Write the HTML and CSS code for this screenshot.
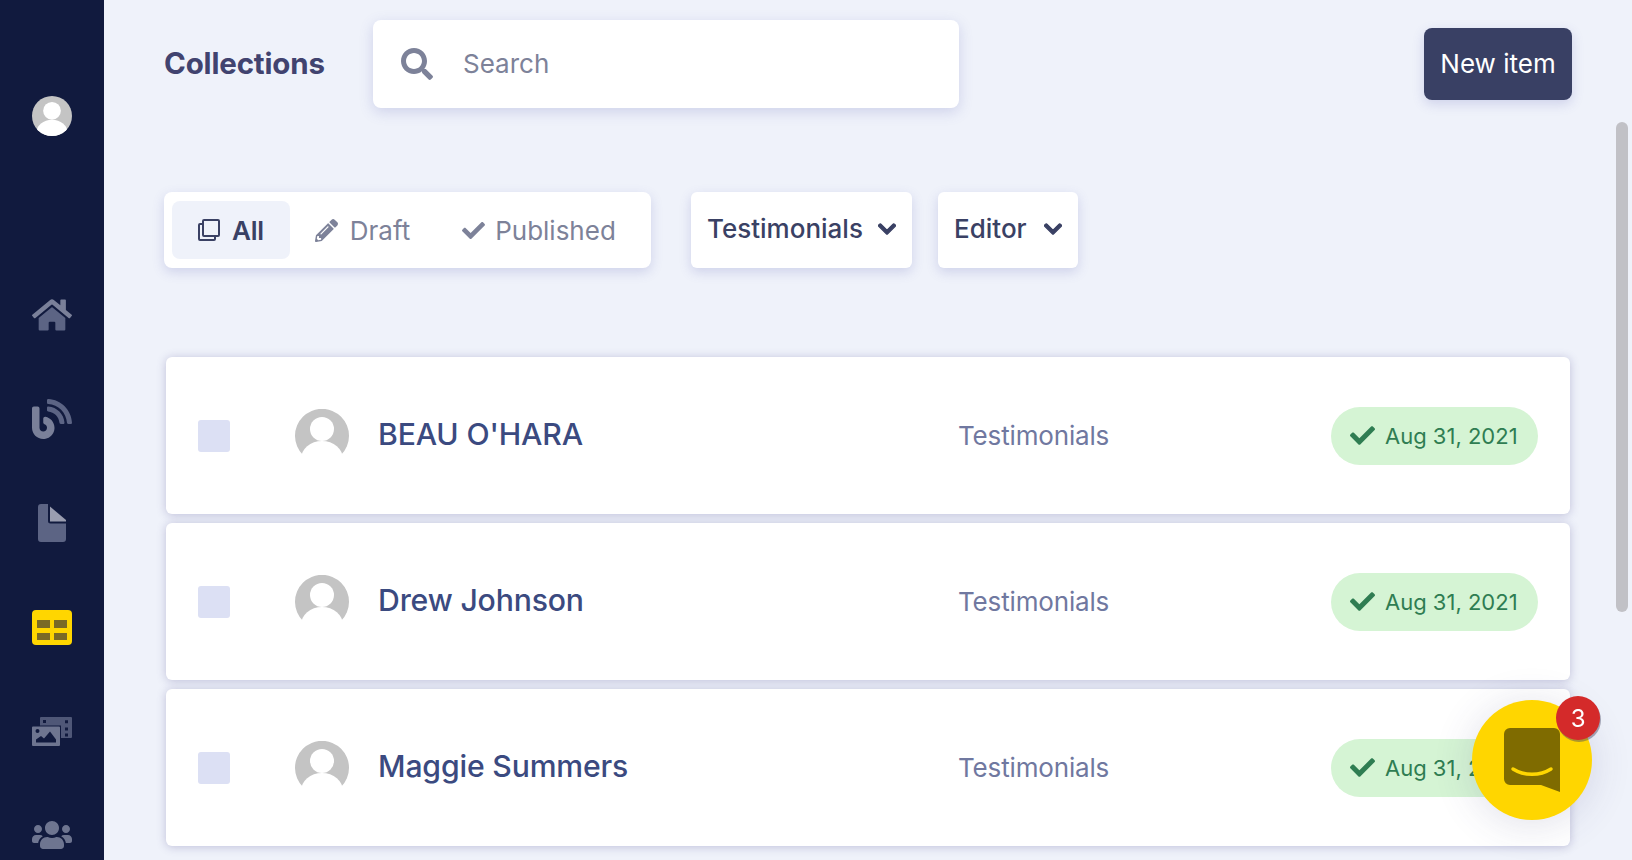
FILE: index.html
```html
<!DOCTYPE html>
<html lang="en">
<head>
<meta charset="utf-8">
<title>Collections</title>
<link rel="stylesheet" href="styles.css">
</head>
<body>
<div class="app">
  <aside class="sidebar">
    <div class="side-avatar">
      <svg viewBox="0 0 54 54" class="avatar-svg"><defs><clipPath id="ca"><circle cx="27" cy="27" r="27"/></clipPath></defs><circle cx="27" cy="27" r="27" fill="#c4c4c4"/><g clip-path="url(#ca)" fill="#fff"><circle cx="27" cy="20" r="12"/><ellipse cx="27" cy="50" rx="21" ry="18"/></g></svg>
    </div>
    <nav class="side-nav">
      <a class="slot"><svg class="i-home" viewBox="0 0 576 512"><path fill="#5c6484" d="M280.37 148.26L96 300.11V464a16 16 0 0 0 16 16l112.06-.29a16 16 0 0 0 15.92-16V368a16 16 0 0 1 16-16h64a16 16 0 0 1 16 16v95.64a16 16 0 0 0 16 16.05L464 480a16 16 0 0 0 16-16V300L295.67 148.26a12.19 12.19 0 0 0-15.3 0z"/><path fill="#7a8099" d="M571.6 251.47L488 182.56V44.05a12 12 0 0 0-12-12h-56a12 12 0 0 0-12 12v72.61L318.47 43a48 48 0 0 0-61 0L4.34 251.47a12 12 0 0 0-1.6 16.9l25.5 31A12 12 0 0 0 45.15 301l235.22-193.74a12.19 12.19 0 0 1 15.3 0L530.9 301a12 12 0 0 0 16.9-1.6l25.5-31a12 12 0 0 0-1.7-16.93z"/></svg></a>
      <a class="slot"><svg class="i-blog" viewBox="0 0 512 512"><path fill="#7a8099" d="M172.2 226.8c-14.6-2.9-28.2 8.9-28.2 23.8V301c0 10.2 7.1 18.4 16.7 22 18.2 6.8 31.3 24.4 31.3 45 0 26.5-21.5 48-48 48s-48-21.5-48-48V120c0-13.3-10.7-24-24-24H24c-13.3 0-24 10.7-24 24v248c0 89.5 82.1 160.2 175 140.7 54.4-11.4 98.3-55.4 109.7-109.7 17.4-82.9-37-157.2-112.5-172.2z"/><path fill="#5c6484" d="M209 0c-9.2-.5-17 6.8-17 16v31.6c0 8.5 6.6 15.5 15 15.9 129.4 7 233.1 112 240.9 241.5.5 8.4 7.5 15 15.9 15h32.1c9.2 0 16.5-7.8 16-17C503.4 139.8 372.2 8.6 209 0zm.3 96c-9.3-.7-17.3 6.7-17.3 16.1v32.1c0 8.4 6.5 15.3 14.8 15.9 76.8 6.3 138 68.2 144.9 145.2.8 8.3 7.6 14.7 15.9 14.7h32.2c9.3 0 16.8-8 16.1-17.3-8.4-110.1-96.5-198.2-206.6-206.7z"/></svg></a>
      <a class="slot"><svg class="i-file" viewBox="0 0 28 38"><path fill="#5c6484" d="M3 0h7v17a2.500 2.500 0 0 0 2.500 2.500H28V35a3 3 0 0 1-3 3H3a3 3 0 0 1-3-3V3a3 3 0 0 1 3-3z"/><path fill="#9a9db0" d="M12 2.500L28 16v1.500H12z"/></svg></a>
      <a class="slot"><svg class="i-table" viewBox="0 0 40 35"><rect width="40" height="35" rx="4" fill="#ffd600"/><g fill="#7a6a26"><rect x="5" y="10" width="13" height="8"/><rect x="22" y="10" width="13" height="8"/><rect x="5" y="23" width="13" height="7"/><rect x="22" y="23" width="13" height="7"/></g></svg></a>
      <a class="slot"><svg class="i-media" viewBox="0 0 40 29"><path fill="#4f5777" fill-rule="evenodd" d="M8 1a1 1 0 0 1 1-1h30a1 1 0 0 1 1 1v19a1 1 0 0 1-1 1h-10V8.500H8zM11 3v3h3V3zM33 3.200v3h3v-3zM33 10.500v3h3v-3zM33 16.500v3h3v-3z"/><path fill="#6e7590" fill-rule="evenodd" d="M1 9.500h26a1 1 0 0 1 1 1v17.500a1 1 0 0 1-1 1H1a1 1 0 0 1-1-1V10.500a1 1 0 0 1 1-1zM5.500 12a2 2 0 1 0 0 4 2 2 0 0 0 0-4zM4 25.500h20v-3l-6-8-6 7-3-2.500-5 3.500z"/></svg></a>
      <a class="slot"><svg class="i-users" viewBox="0 0 640 512"><path fill="#6e7590" d="M96 224c35.3 0 64-28.7 64-64s-28.700-64-64-64-64 28.7-64 64 28.7 64 64 64zm448 0c35.3 0 64-28.7 64-64s-28.700-64-64-64-64 28.7-64 64 28.7 64 64 64zm32 32h-64c-17.6 0-33.5 7.1-45.1 18.6 40.3 22.1 68.9 62 75.1 109.4h66c17.7 0 32-14.3 32-32v-32c0-35.300-28.700-64-64-64zm-256 0c61.9 0 112-50.100 112-112S381.900 32 320 32 208 82.100 208 144s50.100 112 112 112zm76.800 32h-8.300c-20.800 10-43.900 16-68.500 16s-47.600-6-68.500-16h-8.300C179.600 288 128 339.600 128 403.200V432c0 26.500 21.500 48 48 48h288c26.500 0 48-21.500 48-48v-28.800c0-63.600-51.600-115.200-115.200-115.200zm-223.700-13.400C161.500 263.100 145.600 256 128 256H64c-35.300 0-64 28.700-64 64v32c0 17.700 14.300 32 32 32h65.900c6.300-47.400 34.900-87.300 75.200-109.400z"/></svg></a>
    </nav>
  </aside>

  <main class="main">
    <header class="topbar">
      <h1 class="title">Collections</h1>
      <div class="search">
        <svg class="i-search" viewBox="0 0 512 512"><path d="M505 442.700L405.300 343c-4.500-4.500-10.600-7-17-7H372c27.600-35.300 44-79.700 44-128C416 93.100 322.900 0 208 0S0 93.100 0 208s93.100 208 208 208c48.300 0 92.700-16.400 128-44v16.300c0 6.400 2.500 12.500 7 17l99.700 99.700c9.400 9.400 24.600 9.400 33.900 0l28.300-28.300c9.400-9.400 9.400-24.600.1-34zM208 336c-70.700 0-128-57.200-128-128 0-70.700 57.200-128 128-128 70.700 0 128 57.200 128 128 0 70.700-57.200 128-128 128z"/></svg>
        <span class="search-ph">Search</span>
      </div>
      <button class="new-item">New item</button>
    </header>

    <section class="filters">
      <div class="tabs">
        <div class="tab tab-active">
          <svg class="i-copy" viewBox="0 0 22 22"><path fill="none" stroke="currentColor" stroke-width="2" d="M6 1h14a1 1 0 0 1 1 1v14a1 1 0 0 1-1 1H6a1 1 0 0 1-1-1V2a1 1 0 0 1 1-1z"/><path fill="none" stroke="currentColor" stroke-width="2" d="M5 5H2a1 1 0 0 0-1 1v14a1 1 0 0 0 1 1h14a1 1 0 0 0 1-1v-3"/></svg>
          <span>All</span>
        </div>
        <div class="tab tab-draft">
          <svg class="i-pencil" viewBox="0 0 512 512"><path d="M497.900 142.100l-46.100 46.100c-4.700 4.700-12.300 4.700-17 0l-111-111c-4.700-4.700-4.700-12.300 0-17l46.100-46.100c18.700-18.700 49.100-18.700 67.900 0l60.100 60.100c18.800 18.700 18.800 49.100 0 67.900zM284.200 99.800L21.600 362.400.4 483.900c-2.900 16.400 11.400 30.600 27.800 27.800l121.500-21.300 262.600-262.600c4.700-4.700 4.700-12.300 0-17l-111-111c-4.800-4.700-12.400-4.700-17.100 0zM124.100 339.900c-5.500-5.500-5.500-14.300 0-19.800l154-154c5.500-5.500 14.300-5.500 19.800 0s5.500 14.300 0 19.800l-154 154c-5.500 5.500-14.300 5.500-19.800 0zM88 424h48v36.300l-64.500 11.300-31.100-31.100L51.700 376H88v48z"/></svg>
          <span>Draft</span>
        </div>
        <div class="tab tab-published">
          <svg class="i-check" viewBox="0 0 512 512"><path d="M173.898 439.404l-166.400-166.400c-9.997-9.997-9.997-26.206 0-36.204l36.203-36.204c9.997-9.998 26.207-9.998 36.204 0L192 312.690 432.095 72.596c9.997-9.997 26.207-9.997 36.204 0l36.203 36.204c9.997 9.997 9.997 26.206 0 36.204l-294.400 294.401c-9.998 9.997-26.207 9.997-36.204-.001z"/></svg>
          <span>Published</span>
        </div>
      </div>
      <div class="dropdown dd-type">
        <span>Testimonials</span>
        <svg class="i-chev" viewBox="0 0 448 512"><path d="M207.029 381.476L12.686 187.132c-9.373-9.373-9.373-24.569 0-33.941l22.667-22.667c9.357-9.357 24.522-9.375 33.901-.04L224 284.505l154.745-154.021c9.379-9.335 24.544-9.317 33.901.04l22.667 22.667c9.373 9.373 9.373 24.569 0 33.941L240.971 381.476c-9.373 9.372-24.569 9.372-33.942 0z"/></svg>
      </div>
      <div class="dropdown dd-editor">
        <span>Editor</span>
        <svg class="i-chev" viewBox="0 0 448 512"><path d="M207.029 381.476L12.686 187.132c-9.373-9.373-9.373-24.569 0-33.941l22.667-22.667c9.357-9.357 24.522-9.375 33.901-.04L224 284.505l154.745-154.021c9.379-9.335 24.544-9.317 33.901.04l22.667 22.667c9.373 9.373 9.373 24.569 0 33.941L240.971 381.476c-9.373 9.372-24.569 9.372-33.942 0z"/></svg>
      </div>
    </section>

    <section class="rows">
      <article class="row">
        <span class="checkbox"></span>
        <svg class="row-avatar" viewBox="0 0 54 54"><path fill="#c4c4c4" d="M8 46A27 27 0 1 1 46 46z"/><circle cx="27" cy="20" r="12" fill="#fff"/><ellipse cx="27" cy="50" rx="21" ry="18" fill="#fff"/></svg>
        <h2 class="name">BEAU O'HARA</h2>
        <span class="type">Testimonials</span>
        <span class="pill"><svg class="i-pill" viewBox="0 0 512 512"><path d="M173.898 439.404l-166.400-166.400c-9.997-9.997-9.997-26.206 0-36.204l36.203-36.204c9.997-9.998 26.207-9.998 36.204 0L192 312.690 432.095 72.596c9.997-9.997 26.207-9.997 36.204 0l36.203 36.204c9.997 9.997 9.997 26.206 0 36.204l-294.400 294.401c-9.998 9.997-26.207 9.997-36.204-.001z"/></svg>Aug 31, 2021</span>
      </article>
      <article class="row">
        <span class="checkbox"></span>
        <svg class="row-avatar" viewBox="0 0 54 54"><path fill="#c4c4c4" d="M8 46A27 27 0 1 1 46 46z"/><circle cx="27" cy="20" r="12" fill="#fff"/><ellipse cx="27" cy="50" rx="21" ry="18" fill="#fff"/></svg>
        <h2 class="name">Drew Johnson</h2>
        <span class="type">Testimonials</span>
        <span class="pill"><svg class="i-pill" viewBox="0 0 512 512"><path d="M173.898 439.404l-166.400-166.400c-9.997-9.997-9.997-26.206 0-36.204l36.203-36.204c9.997-9.998 26.207-9.998 36.204 0L192 312.690 432.095 72.596c9.997-9.997 26.207-9.997 36.204 0l36.203 36.204c9.997 9.997 9.997 26.206 0 36.204l-294.400 294.401c-9.998 9.997-26.207 9.997-36.204-.001z"/></svg>Aug 31, 2021</span>
      </article>
      <article class="row">
        <span class="checkbox"></span>
        <svg class="row-avatar" viewBox="0 0 54 54"><path fill="#c4c4c4" d="M8 46A27 27 0 1 1 46 46z"/><circle cx="27" cy="20" r="12" fill="#fff"/><ellipse cx="27" cy="50" rx="21" ry="18" fill="#fff"/></svg>
        <h2 class="name">Maggie Summers</h2>
        <span class="type">Testimonials</span>
        <span class="pill"><svg class="i-pill" viewBox="0 0 512 512"><path d="M173.898 439.404l-166.400-166.400c-9.997-9.997-9.997-26.206 0-36.204l36.203-36.204c9.997-9.998 26.207-9.998 36.204 0L192 312.690 432.095 72.596c9.997-9.997 26.207-9.997 36.204 0l36.203 36.204c9.997 9.997 9.997 26.206 0 36.204l-294.400 294.401c-9.998 9.997-26.207 9.997-36.204-.001z"/></svg>Aug 31, 2021</span>
      </article>
    </section>
  </main>
</div>

<div class="scrollbar"></div>

<div class="chat">
  <svg class="chat-bubble" viewBox="0 0 56 64"><path fill="#7f6b00" d="M6 0h44a6 6 0 0 1 6 6v58l-19-7H6a6 6 0 0 1-6-6V6a6 6 0 0 1 6-6z"/><path fill="none" stroke="#ffd600" stroke-width="3.500" stroke-linecap="round" d="M9 41c11 7 27 7 38 0"/></svg>
  <span class="chat-badge">3</span>
</div>
</body>
</html>
```
FILE: styles.css
```css
* { box-sizing: border-box; }
html, body { margin: 0; height: 100%; overflow: hidden; }
body {
  background: #eff2fa;
  font-family: "Inter", "Lato", sans-serif;
  color: #3a4164;
  letter-spacing: -0.01em;
}
.app { display: flex; height: 860px; overflow: hidden; }

.sidebar {
  width: 104px;
  flex: none;
  background: #111a3e;
  padding-top: 96px;
  display: flex;
  flex-direction: column;
  align-items: center;
}
.side-avatar { height: 40px; width: 40px; }
.avatar-svg { display: block; width: 40px; height: 40px; }
.side-nav {
  margin-top: 127px;
  display: flex;
  flex-direction: column;
  align-items: center;
}
.slot {
  height: 104px;
  width: 104px;
  display: flex;
  align-items: center;
  justify-content: center;
}
.slot svg { display: block; }
.i-home { width: 40px; height: 36px; }
.i-blog { width: 40px; height: 40px; }
.i-file { width: 28px; height: 38px; }
.i-table { width: 40px; height: 35px; }
.i-media { width: 40px; height: 29px; }
.i-users { width: 40px; height: 32px; }

.main {
  flex: 1;
  min-width: 0;
  padding: 20px 60px 0 60px;
}
.topbar {
  display: flex;
  align-items: center;
  height: 88px;
}
.title {
  margin: 0 0 2px;
  width: 209px;
  font-size: 29.500px;
  font-weight: 700;
  color: #41436f;
}
.search {
  width: 586px;
  height: 88px;
  background: #fff;
  border-radius: 8px;
  box-shadow: 0 4px 14px rgba(90, 95, 180, .22);
  display: flex;
  align-items: center;
  padding-left: 28px;
  gap: 30px;
}
.i-search { width: 32px; height: 32px; fill: #7d8299; }
.search-ph { font-size: 26px; letter-spacing: 0; color: #7d8299; padding-bottom: 2px; }
.new-item {
  margin-left: auto;
  width: 148px;
  height: 72px;
  border: 0;
  border-radius: 8px;
  background: #394064;
  color: #fff;
  font: inherit;
  font-size: 26px;
  letter-spacing: 0;
  padding: 0 0 2px;
  box-shadow: 0 4px 12px rgba(90, 95, 180, .22);
}

.filters {
  margin-top: 84px;
  display: flex;
  height: 76px;
}
.tabs {
  width: 487px;
  background: #fff;
  border-radius: 8px;
  box-shadow: 0 4px 12px rgba(90, 95, 180, .22);
  padding: 9px 8px;
  display: flex;
  align-items: stretch;
}
.tab {
  display: flex;
  align-items: center;
  gap: 12px;
  font-size: 26px;
  letter-spacing: 0;
  color: #7d8299;
  padding: 0 26px;
  border-radius: 8px;
}
.tab-active {
  background: #eff2fa;
  color: #3a4164;
  font-weight: 600;
  letter-spacing: -0.01em;
}
.tab-draft { padding: 0 25px 0 25px; }
.tab-published { padding: 0 0 0 27px; gap: 10px; }
.i-copy { width: 22px; height: 22px; }
.i-pencil { width: 23px; height: 23px; fill: #7d8299; }
.i-check { width: 23px; height: 23px; fill: #7d8299; }
.dropdown {
  background: #fff;
  border-radius: 6px;
  box-shadow: 0 4px 12px rgba(90, 95, 180, .22);
  display: flex;
  align-items: center;
  justify-content: space-between;
  padding: 0 16px 3px 16px;
  font-size: 26px;
  letter-spacing: 0;
  font-weight: 500;
  color: #3a4164;
}
.dd-type { margin-left: 40px; width: 221px; }
.dd-editor { margin-left: 26px; width: 140px; }
.i-chev { width: 18px; height: 20px; fill: #3a4164; stroke: #3a4164; stroke-width: 30; }

.rows {
  margin: 89px 2px 0 2px;
  display: flex;
  flex-direction: column;
  gap: 9px;
}
.row {
  height: 157px;
  background: #fff;
  border-radius: 6px;
  box-shadow: 0 1px 10px rgba(90, 85, 150, .32);
  display: flex;
  align-items: center;
  padding: 0 32px;
}
.checkbox {
  width: 32px;
  height: 32px;
  border-radius: 3px;
  background: #dce0f4;
  flex: none;
}
.row-avatar { width: 54px; height: 54px; margin-left: 65px; flex: none; }
.name {
  margin: 0 0 4px 29px;
  width: 580px;
  font-size: 30.200px;
  font-weight: 500;
  color: #3b4a80;
}
.type { font-size: 26px; color: #7078a0; }
.pill {
  margin-left: auto;
  width: 207px;
  height: 58px;
  border-radius: 29px;
  background: #d5f4d4;
  color: #2f7d52;
  font-size: 22px;
  letter-spacing: 0;
  display: flex;
  align-items: center;
  padding-left: 19px;
  gap: 10px;
}
.i-pill { width: 25px; height: 25px; fill: #2f7d52; }

.scrollbar {
  position: fixed;
  left: 1616px;
  top: 122px;
  width: 12px;
  height: 490px;
  border-radius: 6px;
  background: #c1c1c6;
}
.chat {
  position: fixed;
  left: 1472px;
  top: 700px;
  width: 120px;
  height: 120px;
  border-radius: 50%;
  background: #ffd600;
  box-shadow: 0 4px 40px rgba(60, 60, 120, .16);
  display: flex;
  align-items: center;
  justify-content: center;
}
.chat-bubble { width: 56px; height: 64px; }
.chat-badge {
  position: absolute;
  left: 84px;
  top: -4px;
  width: 44px;
  height: 44px;
  border-radius: 50%;
  background: #d42a2a;
  color: #fff;
  font-size: 24px;
  display: flex;
  align-items: center;
  justify-content: center;
  box-shadow: 1px 2px 0 rgba(70, 70, 100, .45);
}
```
